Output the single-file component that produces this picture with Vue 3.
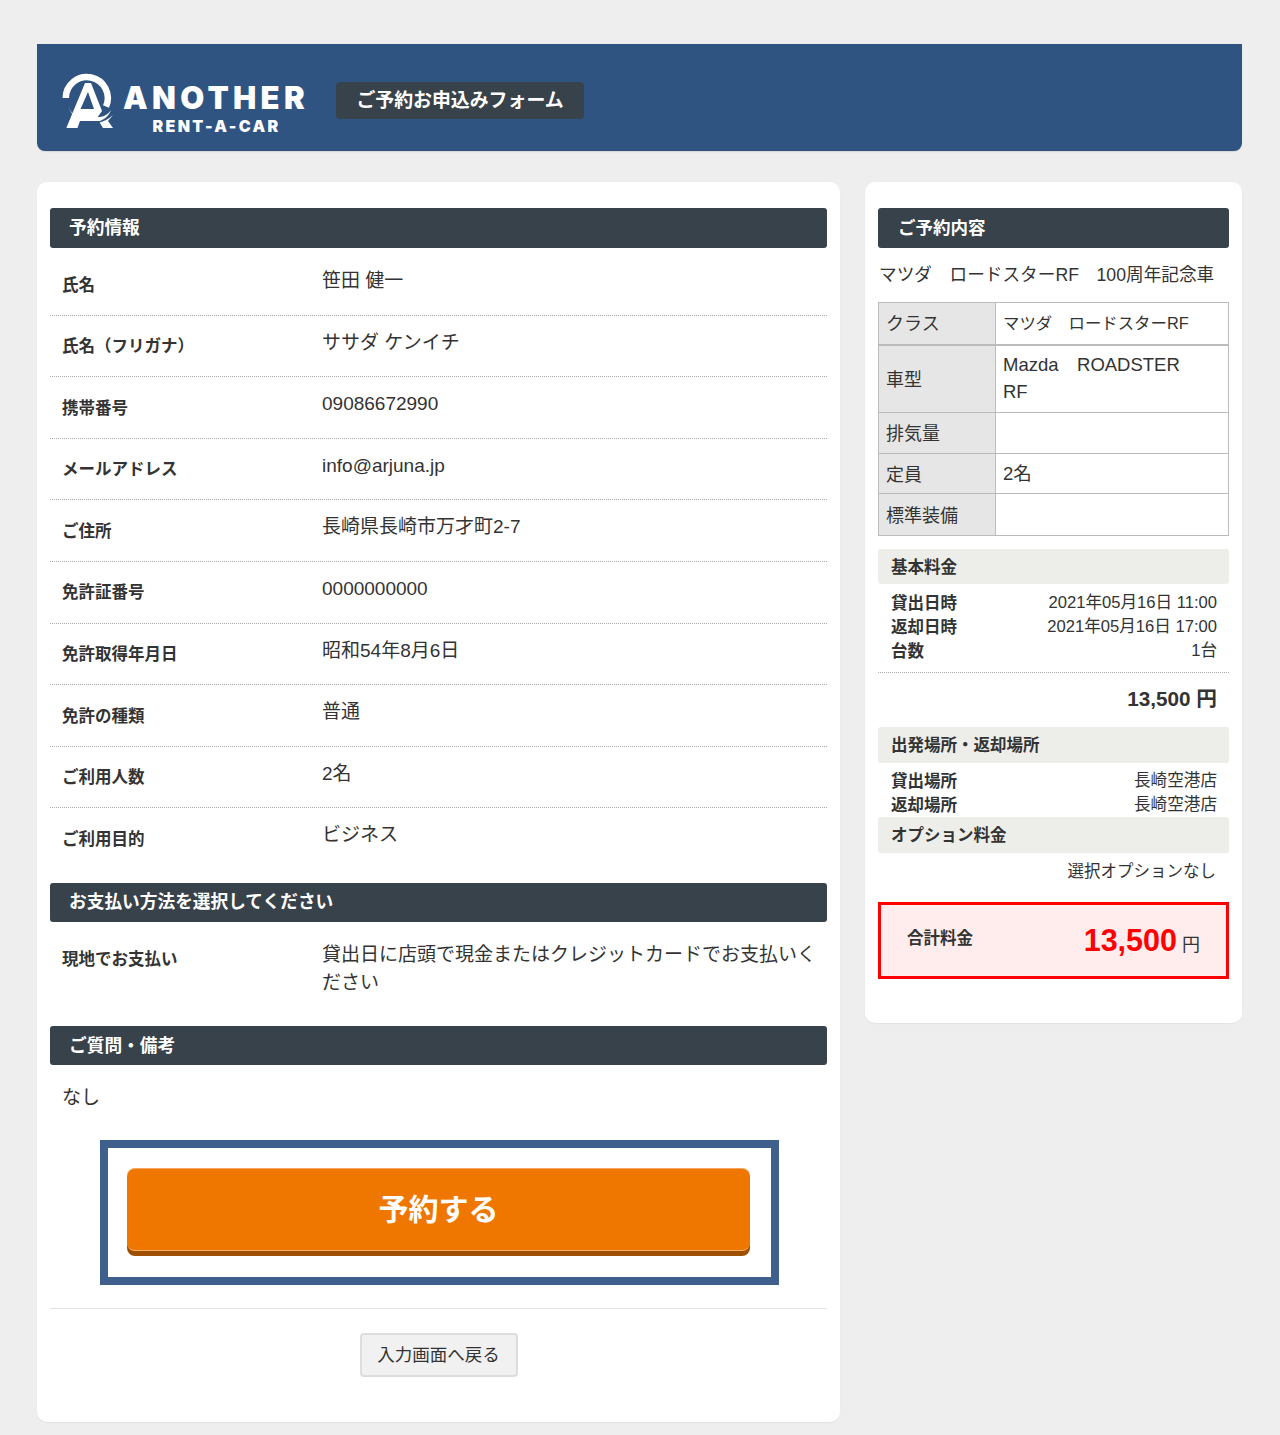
<script setup>
const infoRows = [
  ['氏名', '笹田 健一'],
  ['氏名（フリガナ）', 'ササダ ケンイチ'],
  ['携帯番号', '09086672990'],
  ['メールアドレス', 'info@arjuna.jp'],
  ['ご住所', '長崎県長崎市万才町2-7'],
  ['免許証番号', '0000000000'],
  ['免許取得年月日', '昭和54年8月6日'],
  ['免許の種類', '普通'],
  ['ご利用人数', '2名'],
  ['ご利用目的', 'ビジネス'],
]
const dates = [
  ['貸出日時', '2021年05月16日 11:00'],
  ['返却日時', '2021年05月16日 17:00'],
  ['台数', '1台'],
]
const places = [
  ['貸出場所', '長崎空港店'],
  ['返却場所', '長崎空港店'],
]
</script>

<template>
  <div class="page">
    <header class="top">
      <div class="logo">
        <svg class="mark" viewBox="0 0 54 58" width="54" height="58" aria-hidden="true">
          <path d="M3.800 25 A21 21 0 1 1 44 33.500" fill="none" stroke="#fff" stroke-width="6.500" />
          <path d="M23 10 L29 10 L40 38 L35 45 L19 45 L15.500 55 L4.300 55 Z M26 19 L18.500 36 L32 36 Z" fill="#fff" fill-rule="evenodd" />
          <path d="M6 32 Q9 42 17 44 L38 44 Q45 43 49 37 Q46 45 38 48 L18 48 Q9 43 6 32 Z" fill="#fff" />
          <path d="M51 42 L46 48 L51 55 L41 55 L37.700 49.500 Q45 47.500 51 42 Z" fill="#fff" />
        </svg>
        <div class="wordmark">
          <div class="word-main">ANOTHER</div>
          <div class="word-sub">RENT-A-CAR</div>
        </div>
      </div>
      <div class="form-title">ご予約お申込みフォーム</div>
    </header>

    <div class="columns">
      <main class="card left">
        <h2 class="bar">予約情報</h2>
        <div class="rows">
          <div v-for="(r, i) in infoRows" :key="r[0]" class="row" :class="{ last: i === infoRows.length - 1 }">
            <div class="label">{{ r[0] }}</div>
            <div class="value">{{ r[1] }}</div>
          </div>
        </div>

        <h2 class="bar pay-bar">お支払い方法を選択してください</h2>
        <div class="pay-row">
          <div class="label">現地でお支払い</div>
          <div class="value pay-value">貸出日に店頭で現金またはクレジットカードでお支払いください</div>
        </div>

        <h2 class="bar note-bar">ご質問・備考</h2>
        <p class="note">なし</p>

        <div class="cta-frame">
          <button class="cta" type="button">予約する</button>
        </div>
        <hr class="rule" />
        <div class="back-wrap">
          <button class="back" type="button">入力画面へ戻る</button>
        </div>
      </main>

      <aside class="card right">
        <h2 class="bar side-bar">ご予約内容</h2>
        <p class="car-name">マツダ　ロードスターRF　100周年記念車</p>
        <table class="spec">
          <tbody>
            <tr class="r1"><th>クラス</th><td class="small">マツダ　ロードスターRF</td></tr>
            <tr class="r2"><th>車型</th><td class="wrap">Mazda　ROADSTER RF</td></tr>
            <tr class="r3"><th>排気量</th><td></td></tr>
            <tr class="r4"><th>定員</th><td>2名</td></tr>
            <tr class="r5"><th>標準装備</th><td></td></tr>
          </tbody>
        </table>

        <h3 class="sub first">基本料金</h3>
        <div class="lines dated">
          <div v-for="d in dates" :key="d[0]" class="line"><b>{{ d[0] }}</b><span>{{ d[1] }}</span></div>
        </div>
        <div class="subtotal">13,500 円</div>

        <h3 class="sub">出発場所・返却場所</h3>
        <div class="lines placed">
          <div v-for="p in places" :key="p[0]" class="line"><b>{{ p[0] }}</b><span>{{ p[1] }}</span></div>
        </div>

        <h3 class="sub">オプション料金</h3>
        <div class="no-option">選択オプションなし</div>

        <div class="total">
          <span class="total-label">合計料金</span>
          <span class="total-value"><strong>13,500</strong> 円</span>
        </div>
      </aside>
    </div>
  </div>
</template>

<style>
html, body { margin: 0; background: #eee; }
</style>

<style scoped>
.page {
  box-sizing: border-box;
  width: 1280px;
  height: 1435px;
  padding: 44px 38px 0 37px;
  background: #eee;
  color: #333;
  font-family: "Liberation Sans", "Noto Sans CJK JP", sans-serif;
  overflow: hidden;
}
h2, h3, p { margin: 0; }

.top {
  display: flex;
  align-items: center;
  height: 107px;
  padding-left: 25px;
  background: #2f5482;
  border-radius: 0 0 8px 8px;
  box-shadow: 0 1px 1px #d8d8d8;
}
.logo { display: flex; align-items: flex-start; height: 58px; margin-top: 9px; }
.mark { display: block; }
.wordmark { width: 184px; margin-left: 9px; color: #fff; text-align: center; font-weight: 900; font-family: Inter, "Liberation Sans", sans-serif; }
.word-main { margin: 9.500px 0 0 -2px; font-size: 31px; line-height: 30px; letter-spacing: 4.300px; white-space: nowrap; }
.word-sub { margin: 5px 0 0 -1px; font-size: 16px; line-height: 17px; letter-spacing: 2.300px; white-space: nowrap; }
.form-title {
  margin-left: 27px;
  margin-top: 6px;
  width: 248px;
  height: 37px;
  line-height: 37px;
  text-align: center;
  border-radius: 4px;
  background: #38424b;
  color: #fff;
  font-size: 18.900px;
  font-weight: 700;
}

.columns { display: flex; align-items: flex-start; gap: 25px; margin-top: 31px; }
.card {
  box-sizing: border-box;
  background: #fff;
  border-radius: 10px;
  box-shadow: 0 1px 1px #e2e2e2;
}
.left { width: 803px; height: 1240px; padding: 26px 13px 0; }
.right { width: 377px; height: 841px; padding: 26px 13px 0; }

.bar {
  box-sizing: border-box;
  height: 40px;
  line-height: 40px;
  padding-left: 19px;
  border-radius: 3px;
  background: #38424b;
  color: #fff;
  font-size: 17.700px;
  font-weight: 700;
}
.rows { padding-top: 6px; }
.row {
  box-sizing: border-box;
  display: flex;
  height: 61.600px;
  padding: 0 10px 0 12px;
  border-bottom: 1px dotted #aaa;
}
.row.last { border-bottom: 0; }
.label {
  width: 260px;
  flex: none;
  padding-top: 18.500px;
  font-size: 16.500px;
  line-height: 24px;
  font-weight: 700;
}
.value {
  flex: 1;
  padding-top: 9px;
  font-size: 19px;
  line-height: 38px;
  margin-top: -1px;
}
.pay-bar { height: 39px; line-height: 38px; margin-top: 13px; }
.pay-row { display: flex; height: 104px; padding: 0 10px 0 12px; }
.pay-row .label { padding-top: 25px; }
.pay-value { padding-top: 19px; line-height: 28px; margin-top: 0; }
.note-bar { height: 39px; line-height: 40px; }
.note { padding: 18px 12px 0; font-size: 19px; line-height: 30px; height: 75px; box-sizing: border-box; }

.cta-frame {
  box-sizing: border-box;
  width: 679px;
  height: 145px;
  margin-left: 50px;
  padding: 20px 19px 0;
  border: 8px solid #3f5f8c;
  background: #fff;
}
.cta {
  display: block;
  box-sizing: border-box;
  width: 623px;
  height: 83px;
  padding: 0 0 4px;
  border: 0;
  border-top: 1px solid #f7a860;
  border-bottom: 1px solid #ffb06a;
  border-radius: 8px;
  background: #ef7700;
  box-shadow: 0 5px 0 #9e5000;
  color: #fff;
  font-family: inherit;
  font-size: 30px;
  font-weight: 700;
  text-align: center;
}
.rule { height: 1px; margin: 23px 0 0; border: 0; background: #e2e2e2; }
.back-wrap { display: flex; justify-content: center; padding-top: 24px; }
.back {
  box-sizing: border-box;
  width: 158px;
  height: 44px;
  padding: 0 0 2px;
  border: 2px solid #ddd;
  border-radius: 4px;
  background: #f1f1f1;
  color: #333;
  font-family: inherit;
  font-size: 17.500px;
}

.side-bar { padding-left: 20px; font-size: 17.500px; }
.car-name { height: 54px; line-height: 54px; font-size: 17.650px; white-space: nowrap; padding-left: 1px; }
.spec {
  width: 351px;
  border-collapse: collapse;
  table-layout: fixed;
  font-size: 18.500px;
}
.spec th, .spec td { border: 1px solid #bbb; padding: 0 7px; text-align: left; font-weight: 400; }
.spec th { width: 102px; padding-bottom: 2px; background: #e6e6e6; font-size: 18px; }
.spec td { line-height: 27px; }
.spec td.small { font-size: 16.400px; }
.spec td.wrap { padding: 0 30px 2px 7px; }
.r1 { height: 42px; }
.r1 th, .r1 td { border-bottom-width: 2px; }
.r2 { height: 68px; }
.r3 { height: 41px; }
.r4 { height: 40px; }
.r5 { height: 42px; }

.sub {
  box-sizing: border-box;
  height: 36px;
  line-height: 37px;
  padding-left: 13px;
  border-radius: 3px;
  background: #edeee9;
  font-size: 16.500px;
  font-weight: 700;
}
.sub.first { height: 35px; line-height: 36px; margin-top: 13px; }
.lines { padding: 0 12px 0 13px; font-size: 16.500px; line-height: 24px; }
.line { display: flex; justify-content: space-between; }
.line span { font-size: 16.600px; }
.dated { padding-top: 7px; padding-bottom: 9px; border-bottom: 1px dotted #aaa; }
.subtotal { height: 54px; line-height: 52px; padding-right: 12px; text-align: right; font-size: 20.700px; font-weight: 700; }
.placed { padding-top: 6px; padding-bottom: 0; height: 54px; box-sizing: border-box; }
.no-option { height: 49px; padding-right: 13px; line-height: 36px; text-align: right; font-size: 16.500px; }
.total {
  box-sizing: border-box;
  display: flex;
  align-items: center;
  justify-content: space-between;
  height: 77px;
  padding: 0 26px 0 26px;
  border: 3px solid #f00;
  background: #ffecec;
}
.total-label { font-size: 16.500px; font-weight: 700; margin-top: -8px; }
.total-value { font-size: 18px; }
.total-value strong { color: #f00; font-size: 30.500px; }
</style>
